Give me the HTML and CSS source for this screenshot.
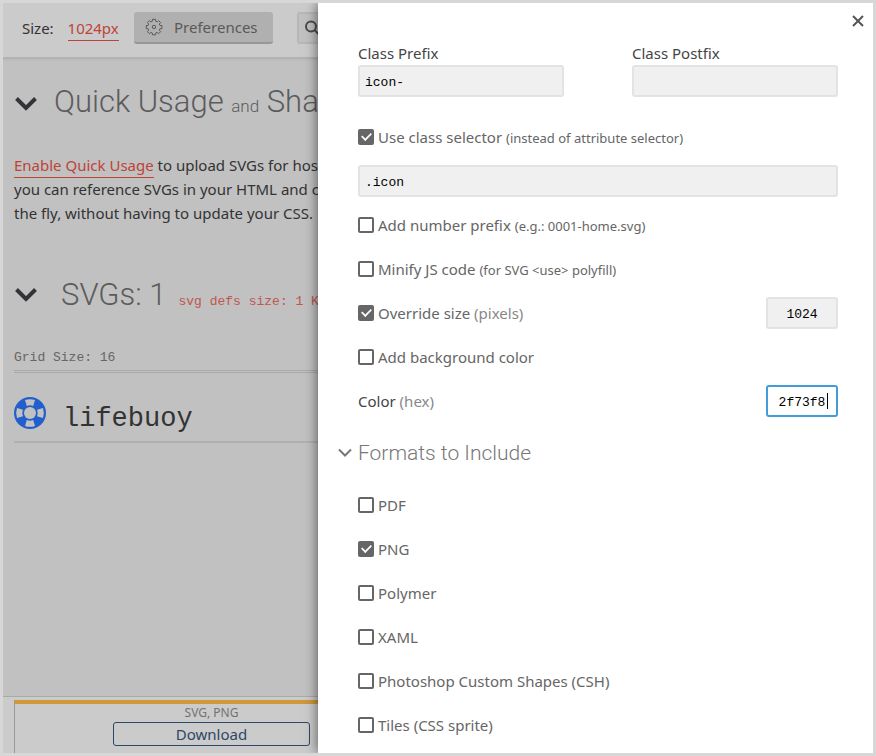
FILE: index.html
```html
<!DOCTYPE html>
<html lang="en">
<head>
<meta charset="utf-8">
<title>Preferences</title>
<link rel="stylesheet" href="styles.css">
</head>
<body>
<div class="app">
  <header class="toolbar">
    <span class="size">Size: <a class="link" href="#size">1024px</a></span>
    <button class="prefs" type="button">
      <svg class="gear" viewBox="0 0 18 18" width="18" height="18" aria-hidden="true">
        <path d="M7.400 1.300h3.200v1.900l1.600.7 1.400-1.300 2 2-1.300 1.500.7 1.400h1.900v3.200h-1.900l-.7 1.500 1.300 1.500-2 2-1.500-1.300-1.500.7v1.700H7.400v-1.700l-1.500-.7-1.500 1.300-2-2 1.300-1.500-.7-1.500H1.300V7.500h1.700l.7-1.400-1.300-1.500 2-2 1.500 1.300 1.500-.7z"/>
        <circle cx="9" cy="9" r="1.700"/>
      </svg>
      Preferences
    </button>
    <button class="search" type="button" aria-label="Search">
      <svg viewBox="0 0 18 18" width="18" height="18" aria-hidden="true"><circle cx="8" cy="7.500" r="5"/><path d="M11.500 11l5 5"/></svg>
    </button>
  </header>

  <main class="content">
    <h1 class="title">
      <svg class="chevron" viewBox="0 0 22 14" width="22" height="14" aria-hidden="true"><path d="M1.500 1.500L11 11l9.500-9.500"/></svg>
      <span>Quick Usage <small>and</small> Sharing</span>
    </h1>
    <p class="intro">
      <span><a class="link" href="#enable">Enable Quick Usage</a> to upload SVGs for hosting</span>
      <span>you can reference SVGs in your HTML and change on</span>
      <span>the fly, without having to update your CSS.</span>
    </p>
    <h2 class="title title-svgs">
      <svg class="chevron" viewBox="0 0 22 14" width="22" height="14" aria-hidden="true"><path d="M1.500 1.500L11 11l9.500-9.500"/></svg>
      <span>SVGs: 1</span>
      <span class="defs">svg defs size: 1 KB</span>
    </h2>
    <div class="grid-size">Grid Size: 16</div>
    <div class="glyph">
      <svg viewBox="0 0 32 32" width="32" height="32" aria-hidden="true">
        <circle class="ring" cx="16" cy="16" r="16"/>
        <path class="gap" d="M11 3Q16 1.300 21 3L19.200 8.900Q16 7.700 12.800 8.900zM11 29Q16 30.700 21 29L19.200 23.100Q16 24.300 12.800 23.100zM3 11Q1.300 16 3 21L8.900 19.200Q7.700 16 8.900 12.800zM29 11Q30.700 16 29 21L23.100 19.200Q24.300 16 23.100 12.800z"/>
        <circle class="gap" cx="16" cy="16" r="6"/>
      </svg>
      <span>lifebuoy</span>
    </div>
  </main>

  <footer class="footer">
    <div class="tab">
      <span class="formats">SVG, PNG</span>
      <button class="download" type="button">Download</button>
    </div>
  </footer>

  <form class="drawer">
    <button class="close" type="button" aria-label="Close">
      <svg viewBox="0 0 12 12" width="12" height="12" aria-hidden="true"><path d="M1 1l10 10M11 1L1 11"/></svg>
    </button>
    <div class="fields">
      <label class="field">Class Prefix <input class="text" type="text" value="icon-"></label>
      <label class="field">Class Postfix <input class="text" type="text"></label>
    </div>
    <label class="row"><input type="checkbox" checked><span>Use class selector <small>(instead of attribute selector)</small></span></label>
    <div class="row"><input class="text" type="text" value=".icon" aria-label="Class selector"></div>
    <label class="row"><input type="checkbox"><span>Add number prefix <small>(e.g.: 0001-home.svg)</small></span></label>
    <label class="row"><input type="checkbox"><span>Minify JS code <small>(for SVG &lt;use&gt; polyfill)</small></span></label>
    <div class="row">
      <label class="option"><input type="checkbox" checked><span>Override size <span class="unit">(pixels)</span></span></label>
      <input class="text short" type="text" value="1024" aria-label="Size in pixels">
    </div>
    <label class="row"><input type="checkbox"><span>Add background color</span></label>
    <div class="row">
      <label class="option dark" for="color"><span>Color <span class="unit">(hex)</span></span></label>
      <input class="text short active" id="color" type="text" value="2f73f8">
    </div>
    <h3 class="section">
      <svg viewBox="0 0 14 10" width="14" height="10" aria-hidden="true"><path d="M1 1.500l6 6 6-6"/></svg>
      Formats to Include
    </h3>
    <label class="row"><input type="checkbox"><span>PDF</span></label>
    <label class="row"><input type="checkbox" checked><span>PNG</span></label>
    <label class="row"><input type="checkbox"><span>Polymer</span></label>
    <label class="row"><input type="checkbox"><span>XAML</span></label>
    <label class="row"><input type="checkbox"><span>Photoshop Custom Shapes (CSH)</span></label>
    <label class="row"><input type="checkbox"><span>Tiles (CSS sprite)</span></label>
  </form>
</div>
</body>
</html>
```
FILE: styles.css
```css
* { box-sizing: border-box; }

body {
  margin: 0;
  font: 15px/24px "Noto Sans", sans-serif;
  color: #333;
}

button, input { font: inherit; margin: 0; }
svg { flex: none; fill: none; stroke: currentColor; }

.app {
  position: relative;
  display: flex;
  flex-direction: column;
  height: 100vh;
  border: 3px solid #d7d7d7;
  background: #c1c1c1;
  overflow: hidden;
}

/* Page under the drawer */
.toolbar {
  display: flex;
  align-items: center;
  height: 56px;
  padding: 0 19px 4px;
  background: #cbcbcb;
  border-bottom: 2px solid #b2b2b2;
  box-shadow: 0 1px 2px #b8b8b8;
}
.link {
  color: #bf4338;
  text-decoration: none;
  border-bottom: 1px solid #bf4338;
}
.size { width: 112px; white-space: nowrap; }
.size .link { margin-left: 10px; padding-bottom: 2px; }
.prefs {
  display: flex;
  align-items: center;
  gap: 11px;
  width: 139px;
  height: 32px;
  padding: 0 11px;
  border: 0;
  border-bottom: 2px solid #979797;
  border-radius: 3px;
  background: #b0b0b0;
  color: #595959;
}
.search {
  width: 180px;
  height: 32px;
  margin-left: 24px;
  padding: 4px;
  border: 2px solid #b7b7b7;
  border-radius: 3px;
  background: #c1c1c1;
  color: #4b4b4b;
  text-align: left;
}
.search svg { display: block; stroke-width: 2; }

.content {
  flex: 1;
  padding: 20px 11px 0 12px;
  white-space: nowrap;
}
.title {
  display: flex;
  align-items: center;
  gap: 17px;
  height: 50px;
  margin: 0;
  font: 300 31px/50px Roboto, sans-serif;
  color: #5c5c5c;
}
.title small { font-size: 17px; }
.title-svgs { align-items: baseline; gap: 12px; }
.title-svgs .chevron { align-self: center; margin-right: 12px; }
.chevron { color: #353337; stroke-width: 4; }
.defs {
  font: 13px/24px "Liberation Mono", monospace;
  color: #c0564d;
}
.intro { margin: 24px 0 45px -1px; }
.intro span { display: block; }
.intro .link { padding-bottom: 2px; }
.grid-size {
  margin: 26px 0 0 -1px;
  height: 27px;
  border-bottom: 3px double #a9a9a9;
  font: 13px/24px "Liberation Mono", monospace;
  color: #666;
}
.glyph {
  display: flex;
  align-items: center;
  gap: 17px;
  height: 70px;
  margin-left: -1px;
  padding-top: 24px;
  border-bottom: 2px solid #b0b0b0;
  font: 27px/40px "Liberation Mono", monospace;
}
.glyph svg { stroke: none; margin-bottom: 12px; }
.ring { fill: #235fcc; }
.gap { fill: #c1c1c1; }

.footer {
  padding: 3px 0 0 11px;
  background: #cbcbcb;
  border-top: 1px solid #aaa;
}
.tab {
  display: flex;
  flex-direction: column;
  height: 53px;
  padding-left: 98px;
  border-top: 4px solid #d0973b;
  border-left: 1px solid #999;
}
.formats {
  width: 197px;
  font-size: 12px;
  line-height: 18px;
  text-align: center;
  color: #737373;
}
.download {
  width: 197px;
  height: 24px;
  padding: 0;
  border: 1px solid #2d4766;
  border-radius: 3px;
  background: none;
  color: #2d4766;
  line-height: 22px;
}

/* Preferences drawer */
.drawer {
  position: absolute;
  top: 0;
  right: 0;
  bottom: 0;
  left: 315px;
  padding: 38px 35px 0 40px;
  background: #fff;
  box-shadow: 0 0 12px rgba(0, 0, 0, .6);
  color: #666;
  overflow: hidden;
}
.close {
  position: absolute;
  top: 12px;
  right: 9px;
  display: flex;
  padding: 0;
  border: 0;
  background: none;
  color: #555;
  stroke-width: 2;
}
.fields {
  display: grid;
  grid-template-columns: 1fr 1fr;
  gap: 68px;
  margin-bottom: 18px;
}
.field { color: #444; }
.text {
  display: block;
  width: 100%;
  height: 32px;
  padding: 2px 5px 0;
  border: 2px solid #e3e3e3;
  border-radius: 3px;
  background: #f0f0f0;
  color: #000;
  font: 13px/24px "Liberation Mono", monospace;
  outline: none;
}
.short { width: 72px; text-align: center; }
/* Focused field, with its caret after the last character */
.active {
  border-color: #429cda;
  background: linear-gradient(#000, #000) 59px 6px / 1px 16px no-repeat #fff;
}
.row {
  display: flex;
  align-items: center;
  justify-content: flex-start;
  gap: 4px;
  height: 44px;
}
.row small { font-size: 13px; }
.option {
  display: flex;
  flex: 1;
  align-items: center;
  gap: 4px;
}
.dark { color: #444; }
.unit { color: #888; }

input[type="checkbox"] {
  appearance: none;
  flex: none;
  display: grid;
  place-items: center;
  width: 16px;
  height: 16px;
  border: 2px solid #666;
  border-radius: 2px;
}
input[type="checkbox"]:checked { background: #666; }
input[type="checkbox"]:checked::before {
  content: "";
  width: 9px;
  height: 5px;
  margin-bottom: 3px;
  border: solid #fff;
  border-width: 0 0 2px 2px;
  transform: rotate(-45deg) scale(.85);
}
.section {
  display: flex;
  align-items: center;
  gap: 6px;
  height: 60px;
  margin: 0 0 0 -20px;
  font: 300 21px/58px Roboto, sans-serif;
  color: #777;
}
.section svg { stroke-width: 2; }
```
